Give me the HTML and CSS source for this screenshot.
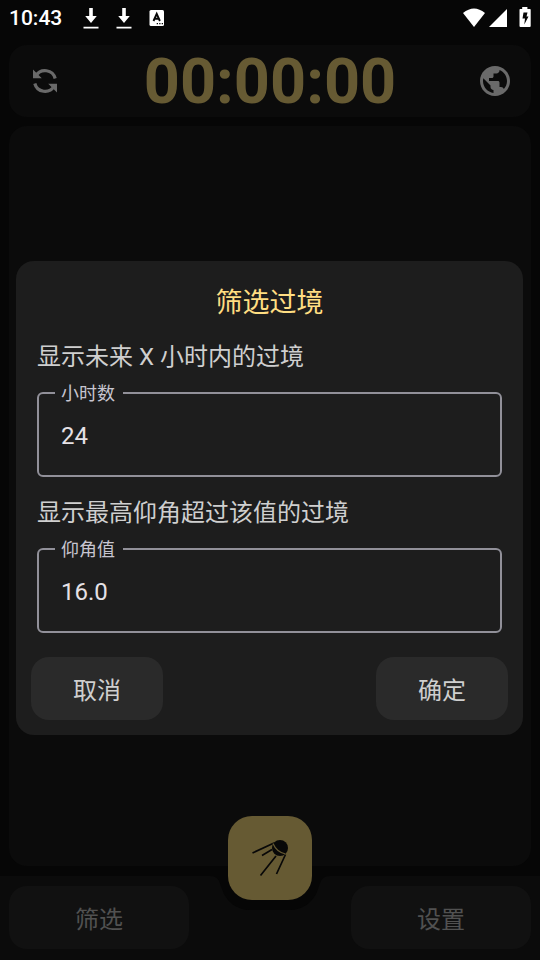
FILE: index.html
```html
<!DOCTYPE html>
<html lang="zh-CN">
<head>
<meta charset="utf-8">
<meta name="viewport" content="width=device-width, initial-scale=1">
<title>筛选过境</title>
<link rel="stylesheet" href="styles.css">
</head>
<body>
<div class="app">
  <div class="status">
    <span class="time">10:43</span>
    <svg viewBox="0 0 16 22" width="16" height="22"><path d="M6.200 1h3.600v8h4L8 16 2.200 9h4zM.5 19.700h15v1.800H.5z"/></svg>
    <svg viewBox="0 0 16 22" width="16" height="22"><path d="M6.200 1h3.600v8h4L8 16 2.200 9h4zM.5 19.700h15v1.800H.5z"/></svg>
    <svg viewBox="0 0 16 18" width="16" height="18"><rect x=".5" y="1" width="14.500" height="16" rx="1.500"/><path d="M4.500 12 7.700 4.800 10.900 12M5.800 9.800h4" fill="none" stroke="#060606" stroke-width="1.900"/><path d="M7.700 14h1.300v1.300H7.700zM10.200 14h1.300v1.300h-1.300zM12.700 14H14v1.300h-1.300z" fill="#060606"/></svg>
    <span class="signals">
      <svg viewBox="0 0 24 20" width="24" height="20"><path d="M12 19 1 5Q12-4 23 5z"/></svg>
      <svg viewBox="0 0 18 18" width="18" height="18"><path d="M0 18 18 0v18z"/></svg>
      <svg class="battery" viewBox="0 0 12 22" width="12" height="22"><path d="M3.200 0h5.200v2H11q.7 0 .7.700V19q0 1-1 1H1.500q-1 0-1-1V2.700Q.5 2 1.200 2h2z"/><path d="M4.500 5.500h4L7.500 9.500h2L5.300 17.500l.7-6H3.500z" fill="#060606"/></svg>
    </span>
  </div>
  <header class="topbar">
    <button class="icon-button" aria-label="刷新"><svg viewBox="0 0 24 24" width="24" height="24"><g fill="none" stroke="#6a6a6a" stroke-width="3.200"><path d="M3 6.800A10.500 10.500 0 0 1 22.200 9.500"/><path d="M21 17.200A10.500 10.500 0 0 1 1.800 14.500"/></g><path d="M0 .5v8.800h8.800zM24 23.500v-8.800h-8.800z"/></svg></button>
    <div class="timer">00:00:00</div>
    <button class="icon-button" aria-label="全球"><svg viewBox="2 2 20 20" width="30" height="30"><path d="M12 2C6.480 2 2 6.480 2 12s4.480 10 10 10 10-4.480 10-10S17.520 2 12 2zm-1 17.930c-3.950-.49-7-3.850-7-7.930 0-.62.08-1.210.21-1.790L9 15v1c0 1.100.9 2 2 2v1.930zm6.900-2.540c-.26-.81-1-1.390-1.900-1.390h-1v-3c0-.55-.45-1-1-1H8v-2h2c.55 0 1-.45 1-1V7h2c1.100 0 2-.9 2-2v-.41c2.930 1.190 5 4.060 5 7.410 0 2.080-.8 3.970-2.100 5.390z"/></svg></button>
  </header>
  <main class="content"></main>
  <nav class="bottombar">
    <button class="nav-button">筛选</button>
    <div class="fab-slot">
      <svg class="notch" viewBox="0 0 124 34" width="124" height="34"><path d="M0 0C12 0 11 6 14 13 18 26 29 34 42 34H82C95 34 106 26 110 13 113 6 112 0 124 0z"/></svg>
      <button class="fab" aria-label="卫星"><svg viewBox="0 2 40 40" width="40" height="40"><circle cx="30" cy="12" r="8"/><g fill="none" stroke="#080808" stroke-width="1.700"><path d="M24 7 2.500 17M22 13.500 12 19.500M26 20 10.500 39.500M35.500 18.500 26.500 38"/></g><path d="M23 7.500Q26.500 16 35.500 18" fill="none" stroke="#665a33" stroke-width="1.200"/></svg></button>
    </div>
    <button class="nav-button">设置</button>
  </nav>
</div>
<div class="scrim">
  <form class="dialog" role="dialog" aria-labelledby="dialog-title">
    <h1 class="dialog-title" id="dialog-title">筛选过境</h1>
    <div class="fields">
      <p class="hint">显示未来 X 小时内的过境</p>
      <fieldset class="field">
        <legend><label for="hours">小时数</label></legend>
        <input id="hours" type="text" inputmode="numeric" value="24">
      </fieldset>
      <p class="hint">显示最高仰角超过该值的过境</p>
      <fieldset class="field">
        <legend><label for="elevation">仰角值</label></legend>
        <input id="elevation" type="text" inputmode="decimal" value="16.0">
      </fieldset>
    </div>
    <div class="actions">
      <button class="action" type="button">取消</button>
      <button class="action" type="button">确定</button>
    </div>
  </form>
</div>
</body>
</html>
```
FILE: styles.css
```css
* {
  box-sizing: border-box;
}

body {
  margin: 0;
  background: #060606;
  color: #cfcfcf;
  font-family: Roboto, "Noto Sans CJK SC", sans-serif;
}

button,
input {
  font: inherit;
  color: inherit;
  border: 0;
  padding: 0;
}

svg {
  display: block;
}

.app {
  display: flex;
  flex-direction: column;
  min-height: 100vh;
}

.status {
  display: flex;
  align-items: center;
  gap: 17px;
  height: 36px;
  padding: 0 9px;
  fill: #fff;
  color: #fff;
}

.time {
  font-size: 21px;
  font-weight: 500;
  margin-right: 4px;
}

.signals {
  display: flex;
  align-items: center;
  gap: 3px;
  margin-left: auto;
}

.battery {
  margin-left: 9px;
}

.topbar {
  display: flex;
  align-items: center;
  justify-content: space-between;
  height: 72px;
  margin: 9px 9px 0;
  padding: 0 21px;
  border-radius: 18px;
  background: #0b0b0b;
}

.icon-button {
  display: grid;
  place-items: center;
  width: 30px;
  height: 30px;
  background: none;
  fill: #6a6a6a;
}

.timer {
  padding-top: 2px;
  color: #665a33;
  font-size: 63px;
  font-weight: 700;
  line-height: 72px;
}

.content {
  flex: 1;
  margin: 9px 9px 10px;
  border-radius: 18px;
  background: #0b0b0b;
}

.bottombar {
  display: flex;
  justify-content: space-between;
  padding: 10px 9px 11px;
  background: #0b0b0b;
}

.nav-button {
  width: 180px;
  height: 63px;
  border-radius: 18px;
  background: #111;
  color: #515151;
  font-size: 24px;
}

.fab-slot {
  position: relative;
  width: 84px;
}

.notch {
  position: absolute;
  top: -10px;
  left: -20px;
  fill: #060606;
}

.fab {
  position: absolute;
  top: -70px;
  left: 0;
  display: grid;
  place-items: center;
  width: 84px;
  height: 84px;
  border-radius: 24px;
  background: #665a33;
  fill: #080808;
}

.scrim {
  position: fixed;
  inset: 0;
  display: flex;
  align-items: center;
  padding: 36px 17px 0 16px;
}

.dialog {
  flex: 1;
  padding: 15px;
  border-radius: 18px;
  background: #1d1d1d;
}

.dialog-title {
  margin: 7px 0 16px;
  color: #ffde82;
  font-size: 27px;
  font-weight: 400;
  line-height: 40px;
  text-align: center;
}

.fields {
  padding: 0 6px;
}

.hint {
  margin: 0;
  font-size: 24px;
  line-height: 36px;
}

.field {
  height: 95px;
  margin: 7px 0 18px;
  padding: 0 22px;
  border: 2px solid #919099;
  border-radius: 6px;
}

.field legend {
  margin-left: -6px;
  padding: 2px 8px 0 6px;
  color: #c7c5d0;
  font-size: 18px;
  line-height: 20px;
}

.field input {
  display: block;
  width: 100%;
  height: 64px;
  background: none;
  color: #e5e1e6;
  font-size: 24px;
  outline: 0;
}

.actions {
  display: flex;
  justify-content: space-between;
  margin-top: 24px;
}

.action {
  width: 132px;
  height: 63px;
  border-radius: 18px;
  background: #2a2a2a;
  font-size: 24px;
}
```
